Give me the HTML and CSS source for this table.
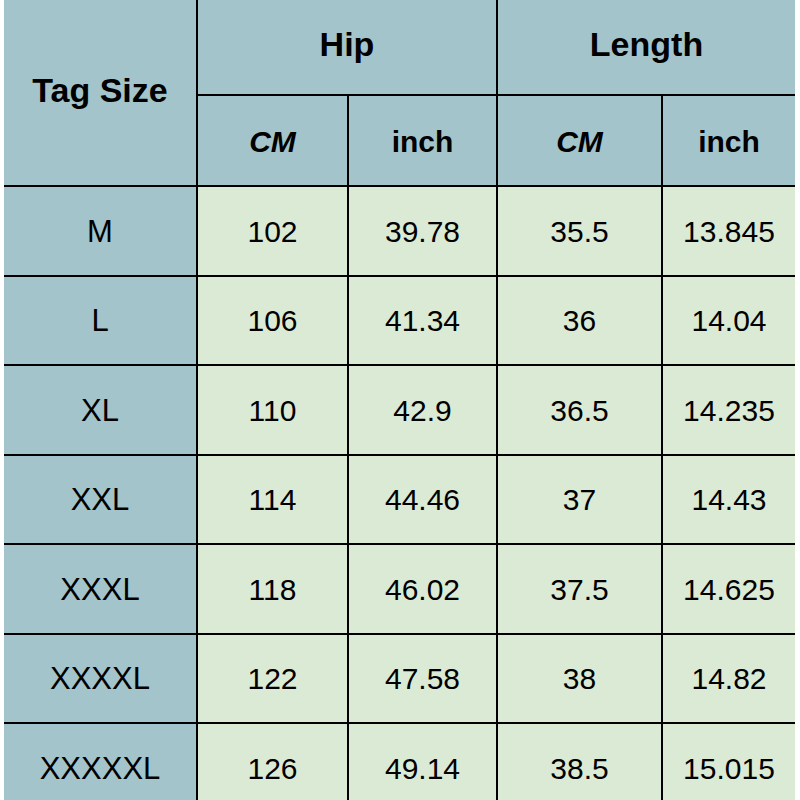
FILE: index.html
```html
<!DOCTYPE html>
<html>
<head>
<meta charset="utf-8">
<link rel="stylesheet" href="styles.css">
</head>
<body>
<div class="page">
  <div class="grid">
    <div class="cell head tag">Tag Size</div>
    <div class="cell head group hip">Hip</div>
    <div class="cell head group len">Length</div>
    <div class="cell head unit cm">CM</div>
    <div class="cell head unit">inch</div>
    <div class="cell head unit cm">CM</div>
    <div class="cell head unit">inch</div>

    <div class="cell size">M</div><div class="cell data">102</div><div class="cell data">39.78</div><div class="cell data">35.5</div><div class="cell data">13.845</div>
    <div class="cell size">L</div><div class="cell data">106</div><div class="cell data">41.34</div><div class="cell data">36</div><div class="cell data">14.04</div>
    <div class="cell size">XL</div><div class="cell data">110</div><div class="cell data">42.9</div><div class="cell data">36.5</div><div class="cell data">14.235</div>
    <div class="cell size">XXL</div><div class="cell data">114</div><div class="cell data">44.46</div><div class="cell data">37</div><div class="cell data">14.43</div>
    <div class="cell size">XXXL</div><div class="cell data">118</div><div class="cell data">46.02</div><div class="cell data">37.5</div><div class="cell data">14.625</div>
    <div class="cell size">XXXXL</div><div class="cell data">122</div><div class="cell data">47.58</div><div class="cell data">38</div><div class="cell data">14.82</div>
    <div class="cell size">XXXXXL</div><div class="cell data">126</div><div class="cell data">49.14</div><div class="cell data">38.5</div><div class="cell data">15.015</div>
  </div>
</div>
</body>
</html>
```

FILE: styles.css
```css
html, body {
  margin: 0;
  padding: 0;
  background: #ffffff;
  overflow: hidden;
}
.page {
  width: 800px;
  height: 800px;
  overflow: hidden;
  padding-left: 4px;
  box-sizing: border-box;
}
.grid {
  display: grid;
  width: 791px;
  grid-template-columns: 192px 149px 147px 163px 132px;
  grid-template-rows: 94px 89px repeat(7, 87.5px);
  gap: 2px;
  background: #000000;
  font-family: "Liberation Sans", Arial, sans-serif;
  color: #000000;
}
.cell {
  display: flex;
  align-items: center;
  justify-content: center;
}
.head {
  background: #a3c4cb;
  font-weight: bold;
}
.tag {
  grid-row: 1 / 3;
  font-size: 34px;
  padding-bottom: 4px;
}
.hip {
  grid-column: 2 / 4;
}
.len {
  grid-column: 4 / 6;
}
.group {
  font-size: 34px;
  padding-bottom: 6px;
}
.unit {
  font-size: 30px;
  padding-top: 2px;
}
.cm {
  font-style: italic;
}
.size {
  background: #a3c4cb;
  font-size: 31px;
  padding-top: 2px;
}
.data {
  background: #dbead5;
  font-size: 30px;
  padding-top: 2px;
}
```
